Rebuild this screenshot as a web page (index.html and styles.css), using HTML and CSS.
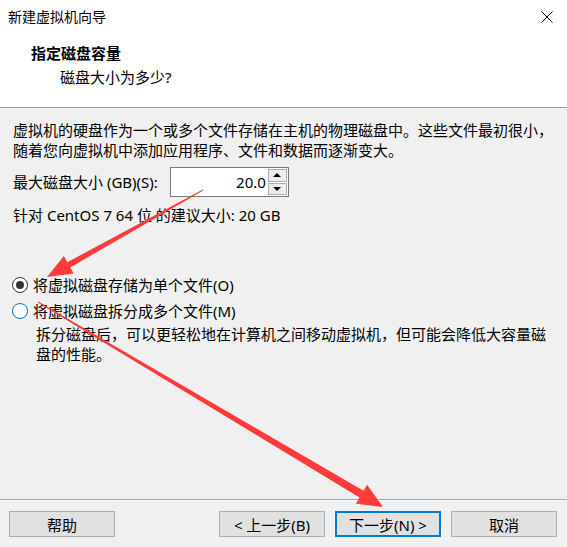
FILE: index.html
```html
<!DOCTYPE html>
<html lang="zh-CN">
<head>
  <meta charset="UTF-8">
  <title>新建虚拟机向导</title>
  <link rel="stylesheet" href="styles.css">
</head>
<body>

  <div class="wizard">
    <div class="titlebar">
      <span>新建虚拟机向导</span>
      <svg class="close" width="12" height="12" viewBox="0 0 12 12">
        <path d="M0.5 0.5 L11.5 11.5 M11.5 0.5 L0.5 11.5" stroke="#000" stroke-width="1" fill="none"/>
      </svg>
    </div>

    <div class="header">
      <div class="header-title">指定磁盘容量</div>
      <div class="header-sub">磁盘大小为多少?</div>
    </div>

    <div class="content">
      <p class="intro">虚拟机的硬盘作为一个或多个文件存储在主机的物理磁盘中。这些文件最初很小，<br>随着您向虚拟机中添加应用程序、文件和数据而逐渐变大。</p>

      <div class="size-row">
        <label>最大磁盘大小 (GB)(S):</label>
        <div class="spin">
          <div class="spin-value">20.0</div>
          <div class="spin-buttons">
            <div class="spin-btn"><span class="tri-up"></span></div>
            <div class="spin-btn"><span class="tri-down"></span></div>
          </div>
        </div>
      </div>

      <div class="recommend">针对 CentOS 7 64 位 的建议大小: 20 GB</div>

      <div class="options">
        <div class="option">
          <span class="radio checked"></span>
          <span>将虚拟磁盘存储为单个文件(O)</span>
        </div>
        <div class="option">
          <span class="radio focus"></span>
          <span>将虚拟磁盘拆分成多个文件(M)</span>
        </div>
        <div class="desc">拆分磁盘后，可以更轻松地在计算机之间移动虚拟机，但可能会降低大容量磁<br>盘的性能。</div>
      </div>
    </div>

    <div class="footer">
      <button class="btn">帮助</button>
      <div class="spacer"></div>
      <button class="btn">&lt; 上一步(B)</button>
      <button class="btn primary">下一步(N) &gt;</button>
      <button class="btn">取消</button>
    </div>
  </div>

  <!-- red annotation arrows drawn over the dialog -->
  <svg class="arrows" width="567" height="547" viewBox="0 0 567 547">
    <polygon fill="#ff3b3b" points="202.8,189.6 67.3,262.2 63.9,256.1 47,277 73.7,273.5 70.3,267.4 203.2,190.4"/>
    <polygon fill="#ff3b3b" points="38.3,301.6 363.5,490.8 367.1,484.7 383,507 355.9,503.7 359.5,497.6 37.7,302.4"/>
  </svg>

</body>
</html>
```

FILE: styles.css
```css
body {
  margin: 0;
  width: 567px;
  height: 547px;
  position: relative;
  overflow: hidden;
  font-family: "Noto Sans", "Noto Sans CJK SC", sans-serif;
  font-size: 15px;
  line-height: 20px;
  color: #000;
  background-color: #f0f0f0;
}

.wizard {
  display: flex;
  flex-direction: column;
  height: 100%;
}

.titlebar {
  height: 33px;
  flex: none;
  background-color: #fff;
  display: flex;
  align-items: center;
  justify-content: space-between;
  padding: 0 14px 0 8px;
  font-size: 14px;
}

.header {
  height: 75px;
  flex: none;
  box-sizing: border-box;
  background-color: #fff;
  border-bottom: 1px solid #a0a0a0;
  padding: 10px 0 0 31px;
}

.header-title {
  font-weight: bold;
}

.header-sub {
  margin-top: 4px;
  padding-left: 29px;
}

.content {
  flex: 1;
  padding: 12px 13px 0 13px;
}

.intro {
  margin: 0;
  white-space: nowrap;
}

.size-row {
  display: flex;
  align-items: center;
  gap: 12px;
  margin-top: 7px;
}

.spin {
  display: flex;
  width: 119px;
  height: 30px;
  box-sizing: border-box;
  border: 1px solid #7a7a7a;
  background-color: #fff;
}

.spin-value {
  flex: 1;
  text-align: right;
  line-height: 28px;
  padding-right: 2px;
}

.spin-buttons {
  width: 19px;
  display: flex;
  flex-direction: column;
  gap: 1px;
  padding: 1px 1px 1px 0;
}

.spin-btn {
  flex: 1;
  border: 1px solid #adadad;
  background-color: #ececec;
  display: flex;
  align-items: center;
  justify-content: center;
}

.tri-up,
.tri-down {
  width: 0;
  height: 0;
  border-left: 4px solid transparent;
  border-right: 4px solid transparent;
}

.tri-up {
  border-bottom: 4px solid #000;
}

.tri-down {
  border-top: 4px solid #000;
}

.recommend {
  margin-top: 8px;
}

.options {
  margin-top: 50px;
}

.option {
  display: flex;
  align-items: center;
  gap: 5px;
  margin-left: -1px;
  margin-bottom: 6px;
}

.radio {
  width: 16px;
  height: 16px;
  box-sizing: border-box;
  border: 1px solid #333;
  border-radius: 50%;
  background-color: #fff;
  display: flex;
  align-items: center;
  justify-content: center;
}

.radio.checked::after {
  content: "";
  width: 8px;
  height: 8px;
  border-radius: 50%;
  background-color: #333;
}

.radio.focus {
  border-color: #0078d7;
}

.desc {
  margin-top: -3px;
  padding-left: 23px;
  white-space: nowrap;
}

.footer {
  height: 48px;
  flex: none;
  box-sizing: border-box;
  border-top: 1px solid #a0a0a0;
  box-shadow: inset 0 1px #fff;
  display: flex;
  align-items: flex-start;
  gap: 10px;
  padding: 11px 10px 0 9px;
}

.spacer {
  flex: 1;
}

.btn {
  width: 106px;
  height: 26px;
  box-sizing: border-box;
  border: 1px solid #adadad;
  background-color: #e1e1e1;
  font-family: inherit;
  font-size: 15px;
  color: #000;
  padding: 0;
}

.btn.primary {
  border: 2px solid #0078d7;
}

.arrows {
  position: absolute;
  top: 0;
  left: 0;
  pointer-events: none;
}
```
